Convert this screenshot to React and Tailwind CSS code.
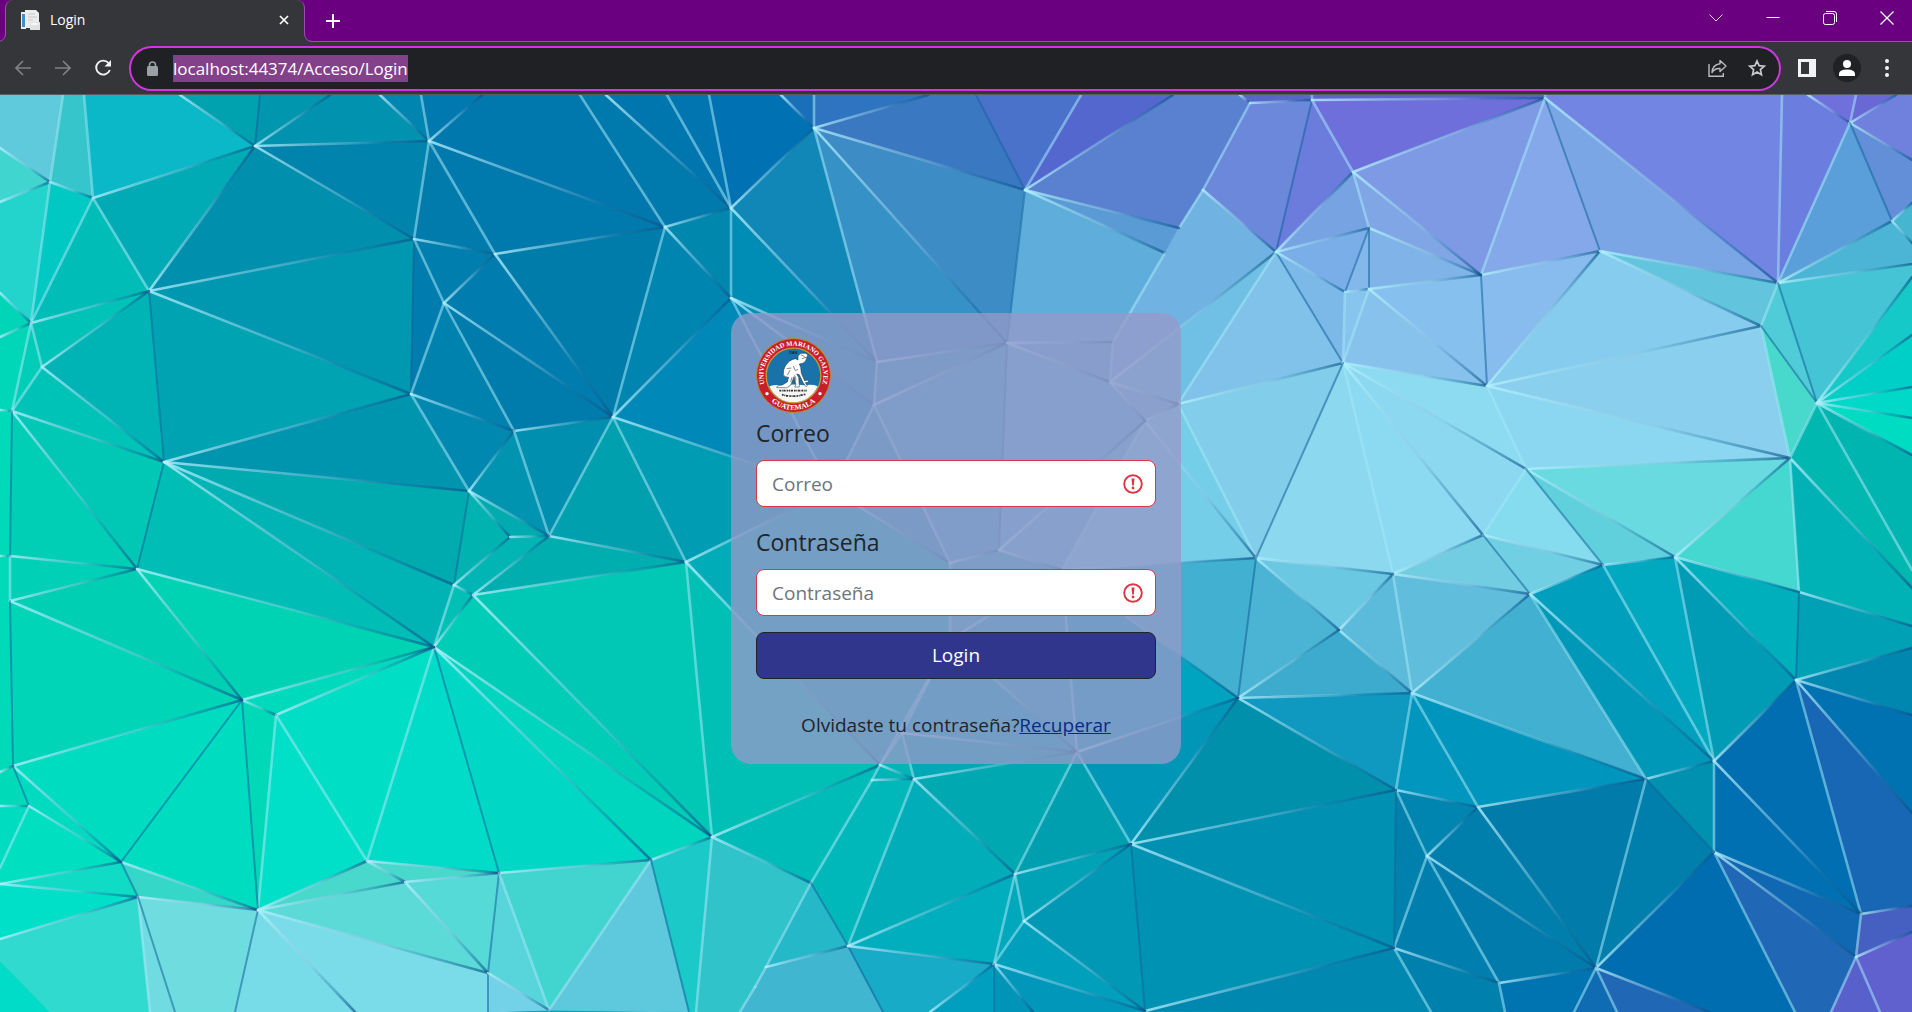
import React from "react";

/* ---------- Low-poly backdrop ---------- */

const POINTS = {
  A1: [50, 182], A2: [93, 198], A3: [255, 146], A4: [429, 141], A5: [149, 291], A6: [414, 239],
  A7: [495, 254], A8: [444, 303], A9: [31, 323], A10: [42, 367], A11: [12, 411], A12: [411, 394],
  A13: [164, 462], A14: [514, 431], A15: [613, 417], A16: [469, 491], A17: [549, 536], A18: [510, 537],
  A19: [665, 227],
  B1: [10, 556], B2: [10, 601], B3: [137, 569], B4: [454, 585], B5: [473, 595], B6: [434, 647],
  B7: [242, 700], B8: [276, 715], B9: [13, 766], B10: [29, 806], B11: [121, 862], B12: [138, 897],
  B13: [258, 910], B14: [367, 861], B15: [405, 882], B16: [499, 873], B17: [488, 973], B18: [549, 1010],
  B19: [651, 860],
  C1: [814, 128], C2: [731, 208], C3: [731, 298], C4: [1025, 190], C5: [877, 362], C6: [874, 405],
  C7: [1007, 343], C8: [1203, 190], C9: [1179, 228], C10: [1165, 253], C11: [1113, 342], C12: [1110, 382],
  C13: [1178, 404], C15: [1145, 421], C16: [1250, 103],
  P1: [832, 490], P2: [950, 563], P3: [1062, 570], P4: [999, 550], P5: [950, 640], P6: [902, 733],
  D1: [686, 562], D2: [712, 837], D3: [880, 765], D4: [872, 780], D5: [914, 779], D6: [1015, 874],
  D7: [1024, 921], D8: [1131, 844], D9: [1077, 752], D10: [811, 883], D11: [848, 946], D12: [766, 967],
  D13: [755, 987], D14: [994, 964], D15: [1145, 1011], D16: [1238, 698], D17: [1256, 558],
  E1: [1312, 100], E2: [1545, 98], E3: [1353, 172], E4: [1276, 252], E5: [1369, 228], E6: [1345, 292],
  E7: [1369, 289], E8: [1481, 275], E9: [1600, 251], E10: [1778, 283], E11: [1761, 326], E12: [1487, 386],
  E13: [1343, 363], E14: [1817, 403], E15: [1790, 458], E16: [1526, 469], E17: [1483, 535],
  E18: [1850, 123], E19: [1892, 221],
  F1: [1393, 574], F2: [1530, 594], F3: [1603, 565], F4: [1675, 557], F5: [1799, 592], F6: [1412, 693],
  F7: [1339, 630], F8: [1396, 790], F9: [1478, 807], F10: [1646, 779], F11: [1714, 761], F12: [1796, 680],
  F13: [1427, 856], F14: [1714, 852], F15: [1394, 948], F16: [1499, 983], F17: [1596, 968],
  F18: [1861, 914], F19: [1856, 957],
};

const FACES = `
0,95 63,95 A1 0,148 #5fcadb
0,148 A1 0,202 #40d6cf
63,95 84,95 A2 A1 #36c5cb
84,95 180,95 A3 A2 #0ab8c8
0,202 A1 A9 0,293 #22d4cb
A1 A2 A9 #00c9c4
A2 A3 A5 #00abb5
A2 A5 A9 #00bdb8
0,293 A9 0,337 #00d5b8
180,95 260,95 A3 #00a2b0
260,95 330,95 A3 #0096ad
330,95 380,95 A4 A3 #0092ae
380,95 421,95 A4 #0084b0
421,95 482,95 A4 #0079b0
A3 A4 A6 #0084ad
A3 A6 A5 #0090ad
A5 A6 A12 #0097b0
A5 A12 A13 #00a3b2
A5 A13 A10 #00b3b4
A5 A10 A9 #00c3b7
A9 A10 A11 #00cdb7
0,337 A9 A11 0,410 #00d6b8
A10 A13 A11 #00c3b8
A11 A13 B3 #00c8b5
A11 B3 B1 #00ceb5
0,410 A11 B1 0,556 #00dab8
B1 B3 B2 #00d0b5
A13 B6 B3 #00bdb5
A13 B4 B6 #00b3b4
A13 A16 B4 #00abb0
A13 A12 A16 #0095ae
A6 A7 A8 #007eae
A6 A8 A12 #007dae
A4 A7 A6 #007bac
A4 A19 A7 #007aac
A7 A19 A15 #007cab
A7 A15 A8 #007dae
A8 A15 A14 #007cac
A8 A14 A12 #0082ae
A12 A14 A16 #0088b0
A14 A17 A16 #0094b0
A14 A15 A17 #008fae
482,95 580,95 A19 A4 #0078ad
580,95 606,95 C2 A19 #007aad
606,95 667,95 C2 #0076ae
667,95 709,95 C2 #0075af
709,95 781,95 C1 C2 #0072b3
781,95 814,95 C1 #1a70b8
A19 C2 C3 #0087ad
A19 C3 A15 #0084b0
A15 C3 P1 #0088b8
C3 C6 P1 #0088b5
C3 C5 C6 #0b8cb8
C2 C5 C3 #008db5
C2 C1 C5 #1187b8
C1 C7 C5 #3591c6
C1 C4 C7 #3d8cc6
C5 C7 C6 #2f9ac5
814,95 928,95 C1 #2f74c0
928,95 976,95 C4 C1 #3b78c2
976,95 1081,95 C4 #4a72cb
1081,95 1173,95 C4 #5467cf
1173,95 1240,95 C16 C8 C9 C4 #5a80d0
C4 C9 C10 #5a9bd6
C4 C10 C11 C7 #5fadda
C8 E4 C12 C11 C10 C9 #70b2e1
E4 C13 C12 #70c0e5
E4 E13 C13 #80c2ea
C16 E1 E4 C8 #6b88db
E1 E3 E4 #6b7cdd
1240,95 1312,95 E1 C16 #5866c8
1312,95 1545,95 E2 E1 #5f62c8
E1 E2 E3 #6f6fdc
E3 E2 E8 #7e9ae5
E2 E9 E8 #84a8ea
E2 E10 E9 #7aa6e6
1545,95 1782,95 E10 E2 #7285e2
1782,95 1808,95 E18 E10 #6b7ddf
1808,95 1856,95 E18 #7070dc
1856,95 1896,95 E18 #6a68d5
1896,95 1912,95 1912,160 E18 #6f80dd
E18 1912,160 1912,203 E19 #628fd8
E18 E19 E10 #5a9fda
E19 1912,243 1912,264 E10 #4cb5d5
E19 1912,203 1912,243 #45b5d0
E3 E5 E4 #78a3e3
E3 E8 E5 #80a6e6
E4 E5 E6 #7aaee8
E5 E7 E6 #84b8ea
E5 E8 E7 #80b4e8
E6 E7 E13 #88c5ee
E4 E6 E13 #7db9e8
E7 E8 E12 #86c0ee
E7 E12 E13 #86c2ec
E8 E9 E12 #88bcee
E9 E11 E12 #86ccee
E9 E10 E11 #62c5dd
E11 E15 E12 #8ad0ee
E12 E15 E16 #8bd6f0
E13 E12 E16 #8cdbf1
E13 E16 E17 #8bd8f0
E13 E17 F1 #8cdaf1
E13 F1 D17 #8bd8ef
C13 E13 D17 #82cdea
C15 C13 D17 #75cee8
P3 C15 D17 #75cee8
E10 E14 E11 #50cbd8
E11 E14 E15 #48d8cc
E10 1912,264 1912,277 E14 #45c4d5
E14 1912,277 1912,335 #15c9c8
E14 1912,335 1912,387 #00cfc8
E14 1912,387 1912,418 #00d8c8
E14 1912,418 1912,455 #00dcc2
E14 1912,455 1912,570 #00b5b0
E14 1912,570 1912,588 E15 #00b8b0
E15 1912,588 1912,626 F5 #00b2b5
E16 E15 F4 #68dae0
E15 F5 F4 #45d8d0
E16 F4 F3 #60d0dc
E17 E16 F3 #85dcee
E17 F3 F2 #70cfe2
E17 F2 F1 #72cde2
F1 F2 F6 #60bddb
F1 F6 F7 #5cbada
D17 F1 F7 #6bc8e2
D17 F7 D16 #4bb3d3
D16 F7 F6 #3cabcd
F2 F6 F10 #42b0d0
F2 F3 F11 #009fbd
F2 F11 F10 #0098b8
F3 F4 F11 #00a8c0
F4 F12 F11 #009bb5
F4 F5 F12 #00afbc
F5 1912,626 1912,648 F12 #00a0b5
F12 1912,648 1912,715 #0087b0
F12 1912,715 1912,813 #0072b2
F12 1912,813 1912,906 F18 #1767b4
F12 F18 F11 #006eb0
F11 F18 F14 #0070b2
F14 F18 F19 #1168b2
F14 F19 1831,1012 1795,1012 #2068b5
F14 1795,1012 1709,1012 F17 #006db0
F18 1912,906 1912,932 F19 #4560c0
F19 1912,932 1912,1012 1880,1012 #6060ce
F19 1880,1012 1831,1012 #5860cc
F6 D16 F8 #0f98c0
F6 F8 F9 #0096bd
F6 F10 F9 #0095bc
F8 F9 F13 #0084b0
F8 F13 F15 #0080ac
F9 F10 F17 #007baa
F9 F17 F13 #007fac
F10 F14 F17 #007eac
F10 F11 F14 #0090b0
F13 F17 F16 #007bab
F13 F16 F15 #007fae
F15 F16 1505,1012 1431,1012 #0080ad
F16 F17 1574,1012 1505,1012 #0074b0
F17 1617,1012 1574,1012 #0f6cb2
F17 1709,1012 1617,1012 #2068b5
D16 F8 D8 #0090ac
D8 F8 F15 #0090b2
D8 F15 D15 #0092b3
D15 F15 1431,1012 #0088b0
D9 D16 D8 #0096b8
P3 D17 D16 #42b0d0
P3 D16 D9 #00a3c0
A17 B5 D1 #00aeb0
A15 A17 D1 #00a0ae
A15 P1 D1 #009cb3
A16 A18 B4 #00b3b0
A16 A17 A18 #00abb0
A18 A17 B5 B4 #00b5b3
B4 B5 B6 #00c0b5
B5 D1 D2 #00c8b5
B5 D2 B6 #00cdb5
B6 D2 B19 #00d5bd
B6 B19 B16 #00d8c5
B6 B16 B14 #00dcc8
B8 B6 B14 #00dfc5
B7 B6 B8 #00dabc
B7 B8 B13 #00d9b8
B8 B14 B13 #00e0c8
B3 B6 B7 #00d3b3
B2 B3 B7 #00cfb3
B2 B7 B9 #00d5b8
B9 B7 B11 #00dcc0
B7 B13 B11 #00dcc0
0,556 B1 B2 B9 0,772 #00dab8
B9 0,772 0,806 B10 #00dab8
B9 B11 B10 #00dbc0
0,806 B10 0,868 #00dcc0
B10 B11 0,884 0,868 #00dfc0
B11 0,884 B12 #10dcc5
0,884 B12 0,939 #00e0c8
B11 B13 B12 #35d8c8
0,939 B12 150,1012 49,1012 0,962 #30dace
0,962 49,1012 0,1012 #00dcc8
B12 B13 235,1012 175,1012 #6fdde0
B12 175,1012 150,1012 #70dce2
B13 355,1012 235,1012 #78dce8
B13 B17 488,1012 355,1012 #7adce9
B13 B15 B17 #5cdad8
B13 B14 B15 #48d8cc
B14 B16 B15 #48d8cc
B15 B16 B17 #55dad8
B16 B18 B17 #58d5da
B16 B19 B18 #42d5d0
B17 B18 488,1012 #74d2e8
B19 B18 689,1012 #5ec8dc
B19 D2 696,1012 689,1012 #1bcac8
D2 D10 D12 D13 740,1012 696,1012 #30c4ca
D1 D3 D2 #00c0b5
D1 P1 P2 P5 D3 #00acb8
C6 P2 P1 #209cc0
C6 C7 P4 P2 #38a4cc
C7 C11 C12 #62a9d8
C7 C12 C15 P4 #58b2d8
C12 C13 C15 #6fb8de
P4 C15 P3 #5cb8dc
P2 P4 P3 P5 #30acc8
P5 P3 D9 #18a8c0
P5 D9 P6 #00a8bc
P5 P6 D3 #00b2b8
P6 D5 D3 #00b5b5
P6 D9 D5 #00a9b5
D3 D5 D4 #00b5b5
D2 D3 D4 D10 #00bcb8
D4 D5 D11 D10 #00b8ba
D10 D11 D12 #25b8c8
D12 D11 883,1012 740,1012 D13 #40b6d0
D5 D6 D11 #00adb8
D11 D6 D14 #00aebd
D11 D14 930,1012 883,1012 #18abc8
D5 D9 D6 #00a8b2
D9 D8 D6 #009fb0
D6 D8 D7 #00a2b5
D6 D7 D14 #00a8bc
D7 D8 D15 #0098b5
D7 D15 D14 #00a0bd
D14 D15 1033,1012 #0097ba
D14 1033,1012 994,1012 #0095b8
D14 994,1012 930,1012 #009fbf
`;

/* Steep creases that lie in shadow from end to end. */
const SHADED = new Set(
  `A5 A13|A13 B3|A6 A12|A11 B1|B2 B9|A16 B4|A9 B10|B7 B13|B7 B11|B16 B17|E5 E6|E5 E7|E8 E12|E2 E9|E4 E13|E1 E4|E10 E14|C4 C7|C7 P4|E13 D17|F5 F12|F8 F15|E18 E19|B9 B10|B11 B12|B13 235,1012|B12 175,1012|B17 488,1012|B19 689,1012|D8 D15|D11 883,1012|D14 994,1012|D17 D16|C4 976,95|A3 260,95|E17 F2|E16 F3|B6 B16|F10 F14|E11 E14|D10 D11`
    .split("|")
    .flatMap((pair) => {
      const [a, b] = pair.split(" ");
      return [a + " " + b, b + " " + a];
    })
);

/* Neighbouring faces whose shared border has no crease. */
const FLAT = new Set(["C10 C9", "C9 C8"]);

const locate = (name) => (name.includes(",") ? name.split(",").map(Number) : POINTS[name]);
const onFrame = (name) => name.includes(",") || locate(name)[1] > 1009;

const faces = FACES.trim()
  .split("\n")
  .map((line) => {
    const parts = line.split(" ");
    const fill = parts.pop();
    return { names: parts, fill };
  });

const creases = [];
const seen = new Set();
faces.forEach(({ names }) => {
  names.forEach((a, i) => {
    const b = names[(i + 1) % names.length];
    const key = [a, b].sort().join(" ");
    if (seen.has(key) || (onFrame(a) && onFrame(b)) || FLAT.has(key)) return;
    seen.add(key);
    const [from, to] = locate(a)[0] <= locate(b)[0] ? [a, b] : [b, a];
    const p = locate(from);
    const q = locate(to);
    const steep = Math.abs(q[0] - p[0]) < 0.7 * Math.abs(q[1] - p[1]);
    const tone = SHADED.has(a + " " + b) ? "shade" : steep ? "light" : "fade";
    creases.push({ p, q, tone });
  });
});

function Backdrop() {
  return (
    <svg
      className="absolute inset-0 h-full w-full"
      viewBox="0 95 1912 917"
      preserveAspectRatio="none"
      aria-hidden="true"
    >
      <defs>
        {creases.map(({ p, q, tone }, i) =>
          tone === "fade" ? (
            <linearGradient key={i} id={"crease" + i} gradientUnits="userSpaceOnUse" x1={p[0]} y1={p[1]} x2={q[0]} y2={q[1]}>
              <stop offset="0" stopColor="#b4f2ff" stopOpacity="0.8" />
              <stop offset="0.55" stopColor="#8fc4e0" stopOpacity="0.4" />
              <stop offset="0.75" stopColor="#1f6f9f" stopOpacity="0.35" />
              <stop offset="1" stopColor="#0a4f86" stopOpacity="0.65" />
            </linearGradient>
          ) : null
        )}
      </defs>
      <rect x="0" y="95" width="1912" height="917" fill="#00a5b8" />
      {faces.map(({ names, fill }, i) => (
        <polygon key={i} points={names.map((n) => locate(n).join(",")).join(" ")} fill={fill} stroke={fill} strokeWidth="1" />
      ))}
      {creases.map(({ p, q, tone }, i) => (
        <line
          key={i}
          x1={p[0]}
          y1={p[1]}
          x2={q[0]}
          y2={q[1]}
          strokeWidth={tone === "shade" ? 2 : 2.6}
          strokeLinecap="round"
          stroke={tone === "fade" ? "url(#crease" + i + ")" : tone === "light" ? "#a5e8f8" : "#14639a"}
          strokeOpacity={tone === "fade" ? 1 : 0.55}
        />
      ))}
    </svg>
  );
}

/* ---------- University seal ---------- */

function Seal() {
  return (
    <svg className="block h-[75px] w-[75px] overflow-visible" viewBox="0 0 225 225" role="img" aria-label="Universidad Mariano Gálvez, Guatemala">
      <defs>
        <path id="sealTop" d="M 30.9 150.5 A 90 90 0 1 1 194.1 150.5" />
        <path id="sealBottom" d="M 23.3 164 A 103 103 0 0 0 201.7 164" />
      </defs>
      <circle cx="112.5" cy="112.5" r="111" fill="#c8202a" stroke="#b98a2c" strokeWidth="3" />
      <circle cx="112.5" cy="112.5" r="82" fill="#1a72aa" stroke="#c09a2e" strokeWidth="4" />
      <path d="M40 145 Q60 138 78 143 Q110 136 146 142 Q170 138 185 145 A79 79 0 0 1 40 145 Z" fill="#f6f6f4" />
      <path
        d="M126 66 L118 62 Q98 66 88 84 Q80 98 82 110 Q86 118 98 118 L94 132 Q82 142 64 144 L62 149 L92 149 Q104 146 108 132 L114 116 L120 140 L116 147 L130 147 L128 118 L122 108 L130 110 L140 132 L150 146 L154 143 L148 134 L158 132 L156 126 L146 128 L136 106 L134 88 L130 78 L140 76 Q152 70 152 58 L156 50 L148 46 L134 46 L126 54 Z"
        fill="#fff"
        stroke="#1e2a33"
        strokeWidth="1.5"
      />
      <path d="M92 92 L106 90 M102 96 L94 112 M112 84 L118 98 L126 94 M108 118 L104 132 M134 50 L146 56 M138 62 L150 58 M116 112 L120 124 L112 136" fill="none" stroke="#4b4b4b" strokeWidth="2" />
      <path d="M70 158 H152 M78 170 Q112 180 150 168" fill="none" stroke="#333" strokeWidth="5" strokeDasharray="5 2 3 2 7 3" />
      <text x="98" y="49" fontSize="12" fontFamily="Liberation Sans, sans-serif" fontWeight="700" fill="#0c2438">1966</text>
      <text fontSize="20" fontFamily="Liberation Serif, serif" fontWeight="700" fill="#fff" textAnchor="middle">
        <textPath href="#sealTop" startOffset="50%">UNIVERSIDAD MARIANO GALVEZ</textPath>
      </text>
      <text fontSize="22" fontFamily="Liberation Serif, serif" fontWeight="700" fill="#fff" textAnchor="middle">
        <textPath href="#sealBottom" startOffset="50%">GUATEMALA</textPath>
      </text>
      <circle cx="33" cy="167" r="5" fill="#fff" />
      <circle cx="192" cy="167" r="5" fill="#fff" />
    </svg>
  );
}

/* ---------- Browser frame ---------- */

function TitleBar() {
  return (
    <header className="flex h-[42px] items-stretch border-b border-[#9a4fae] bg-[#6a0080]">
      <div className="relative ml-[5px] h-[42px] w-[300px] rounded-t-[8px] border-x border-[#9a4fae] bg-[#35363a]">
        <svg className="absolute -left-[9px] bottom-0 h-[9px] w-[9px]" viewBox="0 0 9 9" aria-hidden="true">
          <path d="M9 0 V9 H0 Q8.500 8.500 8.500 0 Z" fill="#35363a" />
          <path d="M0 8.500 Q8.500 8.500 8.500 0" fill="none" stroke="#9a4fae" />
        </svg>
        <svg className="absolute -right-[9px] bottom-0 h-[9px] w-[9px]" viewBox="0 0 9 9" aria-hidden="true">
          <path d="M0 0 V9 H9 Q0.500 8.500 0.500 0 Z" fill="#35363a" />
          <path d="M9 8.500 Q0.500 8.500 0.500 0" fill="none" stroke="#9a4fae" />
        </svg>
        <div className="flex h-10 items-center pl-[14px] pr-[10px]">
          <svg className="h-5 w-5" viewBox="0 0 20 20" aria-hidden="true">
            <path d="M1 2 H6 V19 H1 Z" fill="#e8eef4" />
            <path d="M2 4 H5 V17 H2 Z" fill="#3f8fcf" />
            <path d="M5 0 H16 L19 3 V18 H5 Z" fill="#eceded" />
            <path d="M8 4 H15 M8 7 H17 M8 10 H13" stroke="#c6c9cc" />
            <path d="M10 12 H20 V20 H10 Z" fill="#dfe1e3" />
            <path d="M11 14 H18" stroke="#f8f8f8" strokeWidth="2" />
          </svg>
          <span className="ml-[10px] flex-1 text-[14px] leading-5 text-white">Login</span>
          <button type="button" aria-label="Cerrar pestaña" className="flex h-5 w-5 items-center justify-center">
            <svg className="h-[10px] w-[10px]" viewBox="0 0 10 10" aria-hidden="true">
              <path d="M1 1 L9 9 M9 1 L1 9" stroke="#fff" strokeWidth="1.7" />
            </svg>
          </button>
        </div>
      </div>
      <button type="button" aria-label="Nueva pestaña" className="ml-3 flex w-8 items-center justify-center">
        <svg className="h-4 w-4" viewBox="0 0 16 16" aria-hidden="true">
          <path d="M8 1 V15 M1 8 H15" stroke="#fff" strokeWidth="2" />
        </svg>
      </button>
      <div className="-mr-[3px] ml-auto flex h-9">
        <button type="button" aria-label="Buscar pestañas" className="flex w-[57px] items-center justify-center">
          <svg className="h-[14px] w-[14px]" viewBox="0 0 14 14" fill="none" stroke="#e6d3ea" aria-hidden="true">
            <path d="M0.500 3.500 L7 10 L13.500 3.500" />
          </svg>
        </button>
        <button type="button" aria-label="Minimizar" className="flex w-[57px] items-center justify-center">
          <svg className="h-[14px] w-[14px]" viewBox="0 0 14 14" fill="none" stroke="#fff" aria-hidden="true">
            <path d="M0.500 6.500 H13.500" />
          </svg>
        </button>
        <button type="button" aria-label="Restaurar" className="flex w-[57px] items-center justify-center">
          <svg className="h-[14px] w-[14px]" viewBox="0 0 14 14" fill="none" stroke="#fff" aria-hidden="true">
            <rect x="0.500" y="2.500" width="11" height="11" rx="2" />
            <path d="M3 0.500 H11 Q13.500 0.500 13.500 3 V11" />
          </svg>
        </button>
        <button type="button" aria-label="Cerrar" className="flex w-[57px] items-center justify-center">
          <svg className="h-[14px] w-[14px]" viewBox="0 0 14 14" fill="none" stroke="#fff" strokeWidth="1.3" aria-hidden="true">
            <path d="M0.500 0.500 L13.500 13.500 M13.500 0.500 L0.500 13.500" />
          </svg>
        </button>
      </div>
    </header>
  );
}

function Toolbar() {
  return (
    <div className="flex h-[53px] items-center border-b border-[#5b5c60] bg-[#35363a] pl-[3px] pr-[5px]">
      <button type="button" aria-label="Atrás" className="flex h-10 w-10 items-center justify-center">
        <svg className="h-[18px] w-[18px]" viewBox="0 0 18 18" fill="none" stroke="#808185" strokeWidth="1.7" aria-hidden="true">
          <path d="M17 9 H2 M9 2 L2 9 L9 16" />
        </svg>
      </button>
      <button type="button" aria-label="Adelante" className="flex h-10 w-10 items-center justify-center">
        <svg className="h-[18px] w-[18px]" viewBox="0 0 18 18" fill="none" stroke="#808185" strokeWidth="1.7" aria-hidden="true">
          <path d="M1 9 H16 M9 2 L16 9 L9 16" />
        </svg>
      </button>
      <button type="button" aria-label="Recargar" className="flex h-10 w-10 items-center justify-center">
        <svg className="h-[18px] w-[18px]" viewBox="0 0 18 18" fill="none" stroke="#f1f3f4" strokeWidth="1.9" aria-hidden="true">
          <path d="M14.500 4 A7 7 0 1 0 15.800 11" />
          <path d="M17 1 V7.500 H10.500 Z" fill="#f1f3f4" stroke="none" />
        </svg>
      </button>
      <div className="ml-[6px] flex h-[45px] min-w-0 flex-1 items-center rounded-full border-2 border-[#d633e0] bg-[#202124] pl-4 pr-[2px]">
        <svg className="h-[15px] w-[11px] shrink-0" viewBox="0 0 11 15" aria-hidden="true">
          <path d="M2.500 6 V4 A3 3 0 0 1 8.500 4 V6" fill="none" stroke="#9aa0a6" strokeWidth="1.6" />
          <rect x="0" y="5" width="11" height="10" rx="1.500" fill="#9aa0a6" />
        </svg>
        <input
          type="text"
          aria-label="Dirección"
          defaultValue="localhost:44374/Acceso/Login"
          className="ml-[15px] h-[27px] bg-[#83418a] text-[17px] leading-[27px] text-white outline-none [field-sizing:content]"
        />
        <button type="button" aria-label="Compartir" className="ml-auto flex h-10 w-10 items-center justify-center">
          <svg className="h-[19px] w-[19px]" viewBox="0 0 19 19" fill="none" stroke="#b9bbbf" strokeWidth="1.4" aria-hidden="true">
            <path d="M1 5 V17.300 H15.300 V14" />
            <path d="M12 1.500 L18 7 L12 12.500 V9.500 Q7 9 4 13.500 Q4.500 5.500 12 4.700 Z" strokeLinejoin="round" />
          </svg>
        </button>
        <button type="button" aria-label="Marcador" className="flex h-10 w-10 items-center justify-center">
          <svg className="h-[18px] w-[18px]" viewBox="0 0 18 18" fill="none" stroke="#c7c9cc" strokeWidth="1.7" aria-hidden="true">
            <path d="M9 2 L11.100 6.700 L16.200 7.200 L12.400 10.600 L13.500 15.700 L9 13 L4.500 15.700 L5.600 10.600 L1.800 7.200 L6.900 6.700 Z" />
          </svg>
        </button>
      </div>
      <button type="button" aria-label="Panel lateral" className="ml-[6px] flex h-10 w-10 items-center justify-center">
        <svg className="h-[18px] w-[18px]" viewBox="0 0 18 18" aria-hidden="true">
          <path d="M0 0 H18 V18 H0 Z M3 3 V15 H11 V3 Z" fill="#f1f3f4" fillRule="evenodd" />
        </svg>
      </button>
      <button type="button" aria-label="Perfil" className="flex h-10 w-10 items-center justify-center">
        <svg className="h-7 w-7" viewBox="0 0 28 28" aria-hidden="true">
          <circle cx="14" cy="14" r="14" fill="#202124" />
          <circle cx="14" cy="10" r="4" fill="#fff" />
          <path d="M6 22 V20 Q6 15.500 14 15.500 Q22 15.500 22 20 V22 Z" fill="#fff" />
        </svg>
      </button>
      <button type="button" aria-label="Menú" className="flex h-10 w-10 items-center justify-center">
        <svg className="h-[18px] w-1" viewBox="0 0 4 18" fill="#f1f3f4" aria-hidden="true">
          <circle cx="2" cy="2" r="2" />
          <circle cx="2" cy="9" r="2" />
          <circle cx="2" cy="16" r="2" />
        </svg>
      </button>
    </div>
  );
}

/* ---------- Login form ---------- */

function Field({ id, label, type }) {
  return (
    <div>
      <label htmlFor={id} className="block text-[23px] leading-[30px] text-[#212529]">
        {label}
      </label>
      <div className="relative mt-3">
        <input
          id={id}
          type={type}
          placeholder={label}
          aria-invalid="true"
          className="block h-[47px] w-full rounded-[8px] border border-[#dc3545] bg-white pl-[15px] pr-12 text-[19px] text-[#212529] placeholder-[#6c757d] outline-none"
        />
        <svg className="pointer-events-none absolute right-[13px] top-[14px] h-5 w-5" viewBox="0 0 20 20" aria-hidden="true">
          <circle cx="10" cy="10" r="8.800" fill="none" stroke="#dc3545" strokeWidth="1.900" />
          <path d="M8.500 4.500 H11.500 L10.800 11.500 H9.200 Z" fill="#dc3545" />
          <circle cx="10" cy="14" r="1.400" fill="#dc3545" />
        </svg>
      </div>
    </div>
  );
}

function LoginCard() {
  return (
    <form
      className="relative w-[450px] rounded-[20px] bg-[rgba(149,154,200,0.78)] px-[25px] pb-6 pt-[25px]"
      onSubmit={(e) => e.preventDefault()}
    >
      <Seal />
      <div className="mt-[5px] flex flex-col gap-5">
        <Field id="correo" label="Correo" type="email" />
        <Field id="clave" label="Contraseña" type="password" />
      </div>
      <button
        type="submit"
        className="mt-4 block h-[47px] w-full rounded-[8px] border border-[#212529] bg-[#30368c] text-[19px] text-white"
      >
        Login
      </button>
      <p className="mt-[31px] text-center text-[19px] leading-[30px] text-[#212529]">
        Olvidaste tu contraseña?
        <a href="#recuperar" className="text-[#0a2a86] underline">
          Recuperar
        </a>
      </p>
    </form>
  );
}

export default function App() {
  return (
    <div className="flex min-h-screen flex-col overflow-hidden font-['Open_Sans','Noto_Sans',sans-serif]">
      <TitleBar />
      <Toolbar />
      <main className="relative flex flex-1 items-center justify-center overflow-hidden pb-[30px]">
        <Backdrop />
        <LoginCard />
      </main>
    </div>
  );
}
